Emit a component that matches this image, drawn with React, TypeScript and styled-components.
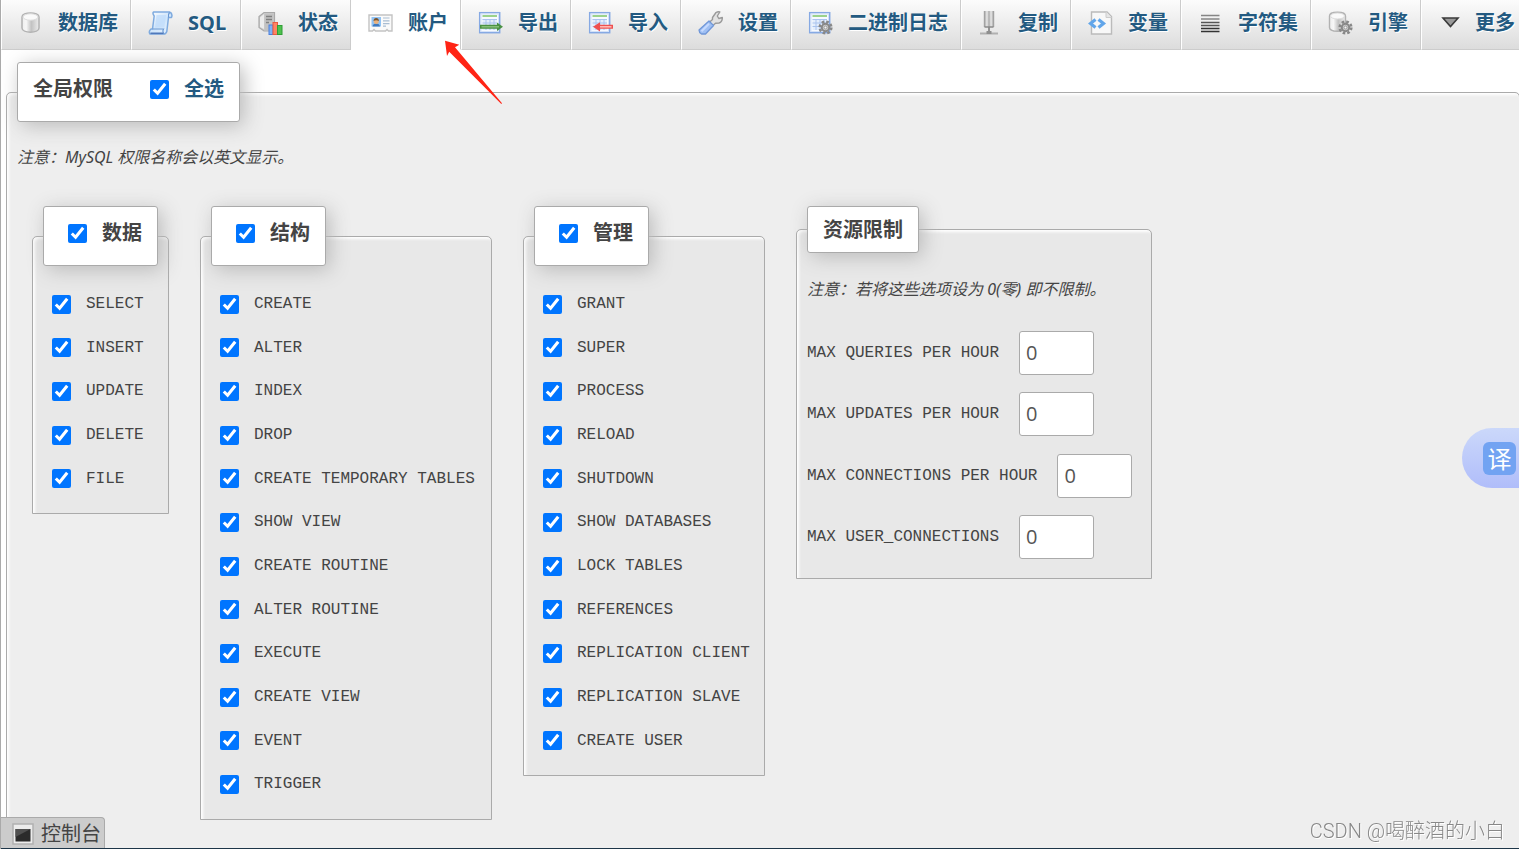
import React from "react";
import styled, { createGlobalStyle } from "styled-components";

const sans = `"Open Sans", "Noto Sans CJK SC", sans-serif`;
const mono = `"Liberation Mono", "Noto Sans CJK SC", monospace`;

const GlobalStyle = createGlobalStyle`
  *, *::before, *::after { box-sizing: border-box; }
  body { margin: 0; background: #fff; color: #444; font-family: ${sans}; font-size: 16px; }
  ul { list-style: none; margin: 0; padding: 0; }
`;

const Shell = styled.div`
  display: flex;
  flex-direction: column;
  height: 100vh;
  overflow: hidden;
  border-left: 1px solid #aaa;
`;

const TabBar = styled.nav`
  flex: none;
  overflow: hidden;
`;

const TabList = styled.ul`
  display: flex;
  height: 50px;
`;

const Tab = styled.li`
  flex: none;
  display: flex;
`;

const TabLink = styled.a<{ $active?: boolean; $tight?: boolean }>`
  display: flex;
  align-items: center;
  gap: ${(p) => (p.$tight ? "12px" : "15px")};
  min-width: 110px;
  padding: 0 12px 4px 16px;
  border-left: 1px solid #fff;
  border-right: 1px solid #ccc;
  border-bottom: 1px solid ${(p) => (p.$active ? "#fff" : "#ccc")};
  background: ${(p) => (p.$active ? "#fff" : "linear-gradient(#fcfcfc, #dcdcdc)")};
  color: #235a81;
  font-size: 20px;
  font-weight: 700;
  line-height: 28px;
  text-decoration: none;
  text-shadow: 1px 1px 0 #fff;
  white-space: nowrap;

  svg {
    flex: none;
    width: 25px;
    height: 24px;
  }
`;

const Fieldset = styled.fieldset`
  margin: 0;
  border: 1px solid #aaa;
  border-radius: 5px 5px 0 0;
  background: #eee;
  box-shadow: inset 2px 2px 3px #fff;
`;

const GlobalPrivileges = styled(Fieldset)`
  flex: 1 0 auto;
  margin: 12px -1px 0 5px;
  padding: 23px 10px 40px;
`;

const Group = styled(Fieldset)<{ $minWidth?: number }>`
  flex: none;
  min-width: ${(p) => (p.$minWidth ? `${p.$minWidth}px` : "auto")};
  padding: 16px 10px 13px;
  background: #e8e8e8;
`;

const LimitGroup = styled(Group)`
  padding: 24px 10px 1px;
`;

const Legend = styled.legend<{ $compact?: boolean }>`
  padding: ${(p) => (p.$compact ? "9px 15px 8px" : "12px 15px 18px")};
  border: 1px solid #aaa;
  border-radius: 3px;
  background: #fff;
  box-shadow: 4px 4px 20px #bbb;
  font-size: 20px;
  font-weight: 700;
  line-height: 28px;
`;

const LegendRow = styled.div`
  display: flex;
  align-items: center;
  gap: 37px;
`;

const LegendCheck = styled.label<{ $link?: boolean; $indent?: boolean }>`
  display: flex;
  align-items: center;
  gap: 15px;
  padding-left: ${(p) => (p.$indent ? "9px" : "0")};
  color: ${(p) => (p.$link ? "#235a81" : "inherit")};
`;

const Checkbox = styled.input.attrs({ type: "checkbox" })`
  flex: none;
  width: 19px;
  height: 19px;
  margin: 0;
  accent-color: #0075ff;
`;

const Note = styled.p`
  margin: 0;
  font-family: "Noto Sans", "Noto Sans CJK SC", sans-serif;
  font-style: italic;
  line-height: 24px;
`;

const Groups = styled.div`
  display: flex;
  align-items: flex-start;
  gap: 31px;
  padding: 37px 15px 0;
`;

const PrivilegeList = styled.ul`
  display: grid;
  grid-auto-rows: 44px 43px 44px;
`;

const PrivilegeRow = styled.li`
  display: flex;
  align-items: center;
  padding-left: 9px;
`;

const PrivilegeLabel = styled.label`
  display: flex;
  align-items: center;
  gap: 15px;
  font-family: ${mono};
  font-size: 16px;
  line-height: 24px;
  white-space: nowrap;
`;

const LimitList = styled.div`
  display: grid;
  grid-auto-rows: 61px 62px;
  margin-top: 30px;
`;

const LimitRow = styled.div`
  display: flex;
  align-items: center;
  gap: 20px;
  height: 44px;
`;

const LimitLabel = styled.label`
  font-family: ${mono};
  font-size: 16px;
  line-height: 24px;
  white-space: nowrap;
`;

const LimitInput = styled.input`
  width: 75px;
  height: 44px;
  padding: 0 6px 2px;
  border: 1px solid #aaa;
  border-radius: 3px;
  background: #fff;
  color: #555;
  font-family: ${sans};
  font-size: 20px;
`;

const ConsoleBar = styled.footer`
  position: fixed;
  left: 1px;
  right: 0;
  bottom: 0;
  border-bottom: 1px solid #1d3548;
`;

const ConsoleButton = styled.button`
  display: flex;
  align-items: center;
  gap: 7px;
  height: 31px;
  padding: 2px 3px 0 11px;
  border: 1px solid #aaa;
  border-width: 1px 1px 0 0;
  border-radius: 0 4px 0 0;
  background: #ccc;
  color: #444;
  font-family: ${sans};
  font-size: 20px;
  line-height: 28px;

  svg {
    flex: none;
    width: 22px;
    height: 22px;
  }
`;

const Translate = styled.button`
  position: fixed;
  top: 428px;
  right: 0;
  display: flex;
  align-items: center;
  justify-content: flex-end;
  width: 57px;
  height: 60px;
  padding: 0 3px 0 0;
  border: 0;
  border-radius: 30px 0 0 30px;
  background: linear-gradient(#cbd8fa, #b0bdfa);
`;

const TranslateGlyph = styled.span`
  width: 33px;
  height: 33px;
  border-radius: 6px;
  background: #72a3f2;
  color: #fff;
  font-family: ${sans};
  font-size: 24px;
  line-height: 33px;
  text-align: center;
`;

const Watermark = styled.div`
  position: fixed;
  right: 14px;
  bottom: 4px;
  color: #888;
  font-family: Roboto, "Noto Sans CJK SC", sans-serif;
  font-size: 20px;
  font-weight: 300;
  line-height: 28px;
  text-shadow: 1px 1px 0 #fff;
`;

const Arrow = styled.svg`
  position: absolute;
  top: 40px;
  left: 444px;
  width: 60px;
  height: 66px;
  pointer-events: none;
`;

function Gear({ x, y }: { x: number; y: number }) {
  return (
    <g transform={`translate(${x} ${y})`}>
      <circle r="5.8" fill="none" stroke="#888" strokeWidth="2.6" strokeDasharray="2.6 1.96" />
      <circle r="3.7" fill="#ccc" stroke="#888" strokeWidth="2" />
      <circle r="1.5" fill="#f4f4f4" stroke="#999" />
    </g>
  );
}

function Sheet() {
  return (
    <>
      <rect x="1.7" y="1.7" width="20" height="20" fill="#f7faff" stroke="#86a9e3" strokeWidth="1.5" />
      <rect x="3" y="3" width="17.5" height="17.5" fill="none" stroke="#d3e1f8" />
      <path d="M4.5 5H19" stroke="#9bd28c" strokeWidth="2" />
      <rect x="4.5" y="8" width="14.5" height="11" fill="#e3edfc" />
      <path d="M4.5 8.5H19M4.5 12H19M4.5 15.5H19M8 8v11M12 8v11M16 8v11" stroke="#a9c3ee" />
    </>
  );
}

const icons: Record<string, React.ReactNode> = {
  database: (
    <>
      <defs>
        <linearGradient id="cyl">
          <stop offset="0" stopColor="#eee" />
          <stop offset=".25" stopColor="#f7f7f7" />
          <stop offset=".55" stopColor="#c2c2c2" />
          <stop offset="1" stopColor="#ededed" />
        </linearGradient>
      </defs>
      <path d="M4 6C4 .5 21 .5 21 6v11C21 22.500 4 22.500 4 17z" fill="url(#cyl)" stroke="#b2b2b2" strokeWidth="1.500" />
      <ellipse cx="12.500" cy="6" rx="7.500" ry="3.200" fill="#fafafa" stroke="#ddd" />
    </>
  ),
  sql: (
    <>
      <defs>
        <linearGradient id="scroll" x2="1" y2="1">
          <stop offset="0" stopColor="#fff" />
          <stop offset=".5" stopColor="#cfe5fb" />
          <stop offset="1" stopColor="#e8f3ff" />
        </linearGradient>
      </defs>
      <path d="M5.500 1H21.500Q25 2.500 23.500 6.500H20.500L18.800 20.500Q17.800 23.500 15 23H2Q.2 20.500 3 18H4.500L6.200 5Q4.200 2.500 5.500 1z" fill="url(#scroll)" stroke="#7fabdf" strokeWidth="1.500" strokeLinejoin="round" />
      <path d="M20.500 6.500Q19.800 3.500 21.500 1.500M4.500 18H15.500Q14 20.500 15.500 22.500" fill="none" stroke="#6a97d2" strokeWidth="1.200" />
      <path d="M2.500 22.300H15.500" stroke="#4f78bb" strokeWidth="1.600" />
      <path d="M8.500 4h9.500l-1.600 12.500H7z" fill="#bfdcfb" opacity=".7" />
    </>
  ),
  status: (
    <>
      <path d="M6 1.500h10.500v18.500H6L1 16.500V5.500z" fill="#cdcdcd" stroke="#a9a9a9" strokeWidth="1.200" />
      <path d="M2 6.500l4-3.500v15l-4-2z" fill="#ececec" />
      <rect x="6.500" y="2.500" width="9" height="17" fill="#c2c2c2" />
      <path d="M8 5.500h6M8 8.500h6M8 11.500h3" stroke="#808080" strokeWidth="1.300" />
      <rect x="11" y="14" width="4" height="9.500" fill="#7db1f5" stroke="#4a7fdd" />
      <rect x="15" y="11.500" width="4.500" height="12" fill="#ff8463" stroke="#e95a43" />
      <rect x="19.500" y="14.500" width="4.500" height="9" fill="#4fc04e" stroke="#2f9f35" />
    </>
  ),
  users: (
    <>
      <path d="M1 4H24V20H20.500L19 18.500 17.500 20H7.500L6 18.500 4.500 20H1z" fill="#fafafa" stroke="#c3c3c3" strokeWidth="1.400" />
      <rect x="3.500" y="6" width="9.500" height="9.500" fill="#8fc2f4" />
      <path d="M4.500 15.500Q5 12.500 8.200 12.500T12 15.500z" fill="#3f79bf" />
      <circle cx="8.200" cy="10.500" r="2.500" fill="#e9b27e" />
      <path d="M5.500 10Q5.700 7 8.200 7T11 10Q8.200 8.500 5.500 10z" fill="#7c542c" />
      <path d="M15 7h6.500M15 9.800h6.500M15 12.600h6.500M15 15.200h3" stroke="#a9bdd2" strokeWidth="1.200" />
    </>
  ),
  exportIcon: (
    <>
      <Sheet />
      <path d="M2 13.800H19V11.500L25 15.800 19 20V17.800H2z" fill="#4a9143" />
      <path d="M3.500 15.800H21" stroke="#8fc784" strokeWidth="1.300" />
    </>
  ),
  importIcon: (
    <>
      <Sheet />
      <path d="M25 13.800H12V11.200L5 15.800l7 4.600V17.800H25z" fill="#ef5050" />
      <path d="M12 15.800H23.500" stroke="#ffb8b2" strokeWidth="1.600" />
    </>
  ),
  settings: (
    <>
      <path d="M14.500 6.500L18 1.500Q20 .3 21.800 1L19.300 5 20.800 7.500 24.300 6.500Q24.500 10.800 21 12L17.500 12.300 14 15.500 10.500 12 14.500 8.500z" fill="#e2e2e2" stroke="#9a9a9a" strokeWidth="1.400" strokeLinejoin="round" />
      <path d="M11 10L15.500 14.500 7.500 23H3.500Q1 21.500 1 19z" fill="#9fbff3" stroke="#7097d8" strokeWidth="1.300" strokeLinejoin="round" />
      <path d="M11 12.800L3.500 20.300" stroke="#c6daff" strokeWidth="2" />
    </>
  ),
  binlog: (
    <>
      <Sheet />
      <Gear x={17.5} y={16.500} />
    </>
  ),
  replication: (
    <>
      <path d="M6.500 0h3v16h-3zM12.500 0h3v16h-3z" fill="#c2c2c2" />
      <path d="M6.500 0v16M15.500 0v16M11 0v20" stroke="#a2a2a2" strokeWidth="1.400" />
      <path d="M8.500 0v16M13.500 0v16" stroke="#ddd" strokeWidth="1.200" />
      <path d="M6.500 16h9M11 16v6" stroke="#8a8a8a" strokeWidth="1.600" />
      <path d="M2 22.500h18" stroke="#b0b0b0" strokeWidth="2" />
      <rect x="8.500" y="20" width="5" height="3" fill="#8f8f8f" />
    </>
  ),
  variables: (
    <>
      <path d="M3.500 1H19L23.500 5.500V23h-20z" fill="#f8f8f8" stroke="#bbb" strokeWidth="1.400" />
      <path d="M18 1V6.500h5.500" fill="#e6e6e6" stroke="#ccc" />
      <path d="M7.500 8.500L2.500 12.500l5 4M10.500 8.500l5 4-5 4" fill="none" stroke="#62a6ea" strokeWidth="3.200" />
    </>
  ),
  charset: (
    <>
      <path d="M3 4.500h18.500M3 8h18.500" stroke="#858585" strokeWidth="1.700" />
      <path d="M3 11.500h18.500M3 14.500h18.500" stroke="#555" strokeWidth="1.700" />
      <path d="M3 17.500h18.500M3 20.500h18.500" stroke="#333" strokeWidth="1.700" />
    </>
  ),
  engines: (
    <>
      <path d="M1.500 5C1.500 0 17.500 0 17.500 5v11.500C17.500 21.500 1.500 21.500 1.500 16.500z" fill="url(#cyl)" stroke="#b2b2b2" strokeWidth="1.400" />
      <ellipse cx="9.500" cy="5" rx="7" ry="3" fill="#fafafa" stroke="#ddd" />
      <Gear x={17.5} y={16.5} />
    </>
  ),
  more: <path d="M5 7H20L12.500 15.500z" fill="#999" stroke="#3a3a3a" strokeWidth="1.600" />,
};

const tabs = [
  { icon: "database", label: "数据库" },
  { icon: "sql", label: "SQL" },
  { icon: "status", label: "状态" },
  { icon: "users", label: "账户", active: true },
  { icon: "exportIcon", label: "导出" },
  { icon: "importIcon", label: "导入" },
  { icon: "settings", label: "设置" },
  { icon: "binlog", label: "二进制日志" },
  { icon: "replication", label: "复制" },
  { icon: "variables", label: "变量" },
  { icon: "charset", label: "字符集" },
  { icon: "engines", label: "引擎" },
  { icon: "more", label: "更多", tight: true },
];

const groups = [
  { title: "数据", items: ["SELECT", "INSERT", "UPDATE", "DELETE", "FILE"] },
  {
    title: "结构",
    minWidth: 292,
    items: [
      "CREATE", "ALTER", "INDEX", "DROP", "CREATE TEMPORARY TABLES", "SHOW VIEW",
      "CREATE ROUTINE", "ALTER ROUTINE", "EXECUTE", "CREATE VIEW", "EVENT", "TRIGGER",
    ],
  },
  {
    title: "管理",
    minWidth: 242,
    items: [
      "GRANT", "SUPER", "PROCESS", "RELOAD", "SHUTDOWN", "SHOW DATABASES",
      "LOCK TABLES", "REFERENCES", "REPLICATION CLIENT", "REPLICATION SLAVE", "CREATE USER",
    ],
  },
];

const limits = [
  { id: "max_questions", label: "MAX QUERIES PER HOUR" },
  { id: "max_updates", label: "MAX UPDATES PER HOUR" },
  { id: "max_connections", label: "MAX CONNECTIONS PER HOUR" },
  { id: "max_user_connections", label: "MAX USER_CONNECTIONS" },
];

export default function App() {
  return (
    <>
      <GlobalStyle />
      <Shell>
        <TabBar>
          <TabList>
            {tabs.map((tab) => (
              <Tab key={tab.label}>
                <TabLink
                  href="#"
                  $active={tab.active}
                  $tight={tab.tight}
                  aria-current={tab.active ? "page" : undefined}
                >
                  <svg viewBox="0 0 25 24" aria-hidden="true">{icons[tab.icon]}</svg>
                  {tab.label}
                </TabLink>
              </Tab>
            ))}
          </TabList>
        </TabBar>

        <GlobalPrivileges>
          <Legend>
            <LegendRow>
              全局权限
              <LegendCheck $link>
                <Checkbox defaultChecked />
                全选
              </LegendCheck>
            </LegendRow>
          </Legend>
          <Note>注意：MySQL 权限名称会以英文显示。</Note>
          <Groups>
            {groups.map((group) => (
              <Group key={group.title} $minWidth={group.minWidth}>
                <Legend>
                  <LegendCheck $indent>
                    <Checkbox defaultChecked />
                    {group.title}
                  </LegendCheck>
                </Legend>
                <PrivilegeList>
                  {group.items.map((item) => (
                    <PrivilegeRow key={item}>
                      <PrivilegeLabel>
                        <Checkbox defaultChecked />
                        {item}
                      </PrivilegeLabel>
                    </PrivilegeRow>
                  ))}
                </PrivilegeList>
              </Group>
            ))}
            <LimitGroup $minWidth={356}>
              <Legend $compact>资源限制</Legend>
              <Note>注意：若将这些选项设为 0(零) 即不限制。</Note>
              <LimitList>
                {limits.map((limit) => (
                  <LimitRow key={limit.id}>
                    <LimitLabel htmlFor={limit.id}>{limit.label}</LimitLabel>
                    <LimitInput id={limit.id} defaultValue="0" />
                  </LimitRow>
                ))}
              </LimitList>
            </LimitGroup>
          </Groups>
        </GlobalPrivileges>
      </Shell>

      <ConsoleBar>
        <ConsoleButton type="button">
          <svg viewBox="0 0 22 22" aria-hidden="true">
            <rect x="1" y="1" width="20" height="20" fill="#ececec" stroke="#b0b0b0" strokeWidth="1.500" />
            <rect x="3.500" y="6" width="15" height="12.500" fill="#2b2b2b" />
            <path d="M3.500 6h15L3.500 14z" fill="#505050" />
          </svg>
          控制台
        </ConsoleButton>
      </ConsoleBar>
      <Translate type="button">
        <TranslateGlyph>译</TranslateGlyph>
      </Translate>
      <Watermark>CSDN @喝醉酒的小白</Watermark>
      <Arrow viewBox="0 0 60 66" aria-hidden="true">
        <path d="M1 .7L15.300 4.700 11 7.300 58 63.200 57.300 63.900 5.200 11.700 3 16z" fill="#ff2415" />
      </Arrow>
    </>
  );
}
